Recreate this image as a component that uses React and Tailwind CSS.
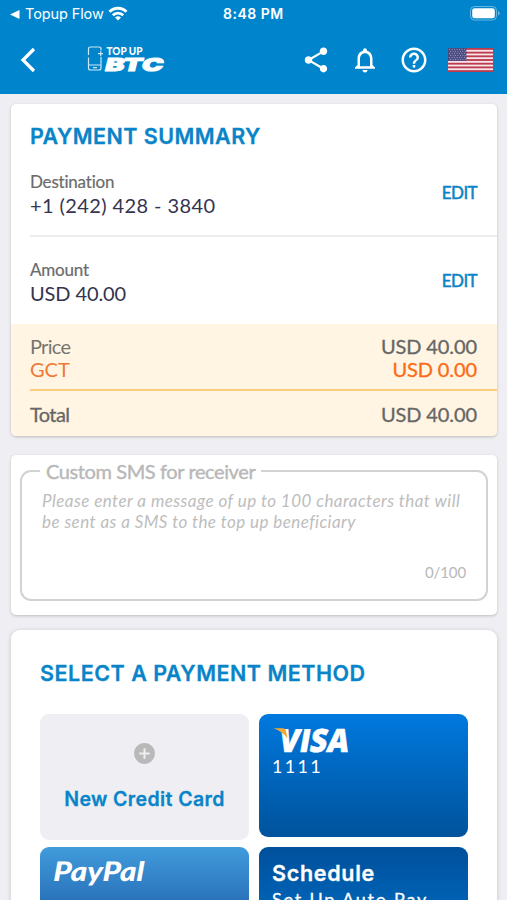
import { MdShare, MdNotificationsNone, MdHelpOutline, MdAddCircle } from "react-icons/md";

const futura = "font-['Lato','Open_Sans',sans-serif]";

function StatusBar() {
  return (
    <div className="flex h-7 items-center px-2.5 text-white">
      <div className="flex w-[213px] items-center">
        <svg className="mr-[5px]" width="10" height="9" viewBox="0 0 10 9"><path d="M0 4.5 9.5 0v9z" fill="#fff" /></svg>
        <span className="w-[79px] whitespace-nowrap text-[14.5px] leading-5 tracking-[-0.1px]">Topup Flow</span>
        <svg className="ml-1 -mt-0.5" width="20" height="15" viewBox="0 0 20 15" fill="none" stroke="#fff" strokeWidth="2.8">
          <path d="M1.5 5.8a12 12 0 0 1 17 0" />
          <path d="M4.8 9.2a7.4 7.4 0 0 1 10.4 0" />
          <path d="M10 14.6 7 11.6a4.3 4.3 0 0 1 6 0z" fill="#fff" stroke="none" />
        </svg>
      </div>
      <span className="whitespace-nowrap text-[14px] font-semibold leading-5 tracking-[0.5px]">8:48 PM</span>
      <svg className="ml-auto -mr-[3px] -mt-0.5" width="30" height="15" viewBox="0 0 30 15">
        <rect x="0.5" y="0.5" width="26" height="13.5" rx="4" fill="none" stroke="#fff" strokeOpacity=".4" />
        <rect x="2.2" y="2.2" width="22.6" height="10.1" rx="2.4" fill="#fff" />
        <path d="M28 5v4.5q1.6-.8 1.6-2.2T28 5" fill="#fff" fillOpacity=".45" />
      </svg>
    </div>
  );
}

function BtcLogo() {
  return (
    <svg className="overflow-visible" width="90" height="30" viewBox="0 0 90 30">
      <g fill="none" stroke="#fff" strokeOpacity=".8" strokeWidth="1.2">
        <path d="M14 5.500V4q0-2-2-2H3.500q-2 0-2 2v6M1.500 12.500V23q0 2 2 2H12q2 0 2-2V12M1.500 20H14M6 22.600h4" />
        <path d="M11 8.700h5M13.700 6.300v5" />
      </g>
      <text x="19.500" y="10" fill="#fff" fontFamily="Lato" fontWeight="900" fontSize="10.500" textLength="36" lengthAdjust="spacingAndGlyphs">TOP UP</text>
      <text transform="translate(17 26) skewX(-14)" fill="#fff" stroke="#fff" strokeWidth=".9" fontFamily="Inter" fontWeight="900" fontSize="17.800" textLength="58" lengthAdjust="spacingAndGlyphs">BTC</text>
    </svg>
  );
}

function Flag() {
  const stars = [];
  for (let r = 0; r < 6; r++) for (let c = 0; c < 7; c++) stars.push([1.6 + c * 2.4 + (r % 2) * 0.9, 1.3 + r * 2]);
  return (
    <svg width="45" height="24" viewBox="0 0 44 24" preserveAspectRatio="none">
      <rect width="44" height="24" fill="#f6e6ea" />
      {[0, 1, 2, 3, 4, 5, 6].map((i) => (
        <rect key={i} y={(i * 48) / 13} width="44" height={24 / 13} fill="#bd3a50" />
      ))}
      <rect width="18" height="12.900" fill="#494a80" />
      {stars.map(([x, y], i) => (
        <circle key={i} cx={x} cy={y} r=".5" fill="#b9b8d2" />
      ))}
    </svg>
  );
}

function NavBar() {
  return (
    <div className="flex h-16 items-center pr-[14px] pl-5 text-white">
      <svg width="18" height="28" viewBox="0 0 18 28" fill="none" stroke="#fff" strokeWidth="3.200"><path d="M14 3 3 14l11 11" /></svg>
      <div className="ml-[49px]"><BtcLogo /></div>
      <div className="ml-auto flex items-center">
        <MdShare size={30} />
        <MdNotificationsNone size={30} className="ml-[19px]" />
        <MdHelpOutline size={30} className="mr-[19px] ml-[19px]" />
        <Flag />
      </div>
    </div>
  );
}

function DetailRow({ label, labelClass, value, valueClass }) {
  return (
    <div className="flex items-center justify-between pr-5">
      <div>
        <div className={`${futura} h-[23px] text-[17px] leading-[23px] text-[#6b6b6b] [-webkit-text-stroke:0.2px_#6b6b6b] ${labelClass}`}>{label}</div>
        <div className={`${futura} h-[23px] whitespace-nowrap text-[20px] leading-[24px] text-[#34344f] ${valueClass}`}>{value}</div>
      </div>
      <button className={`${futura} text-[17px] leading-6 tracking-[-0.600px] text-[#0a84c6] [-webkit-text-stroke:0.5px_#0a84c6]`}>EDIT</button>
    </div>
  );
}

function PaymentSummary() {
  return (
    <section className="flex h-[332px] flex-col overflow-hidden rounded-[5px] bg-white shadow-[0_1px_3px_rgba(0,0,0,0.22)]">
      <h2 className="mt-[18px] ml-[19px] text-[21.5px] leading-7 font-semibold tracking-[0.45px] whitespace-nowrap text-[#0984c8] [-webkit-text-stroke:0.3px_#0984c8]">PAYMENT SUMMARY</h2>
      <div className="mt-5 ml-[19px] h-[67px] border-b-2 border-[#ededf0]">
        <DetailRow label="Destination" labelClass="tracking-[-0.2px]" value="+1 (242) 428 - 3840" valueClass="tracking-[0.4px]" />
      </div>
      <div className="mt-[21px] ml-[19px]">
        <DetailRow label="Amount" labelClass="tracking-[-0.2px]" value="USD 40.00" valueClass="tracking-[-0.1px]" />
      </div>
      <div className={`${futura} mt-auto h-[112px] bg-[#fff5e2] pl-[19px]`}>
        <div className="flex h-[67px] justify-between border-b-2 border-[#f9cf7d] pt-[11px] pr-5 text-[20px] leading-[23px] text-[#666]">
          <div className="text-[#757571]">
            <div className="tracking-[-0.7px]">Price</div>
            <div className="text-[#f07838]">GCT</div>
          </div>
          <div className="text-right tracking-[-0.1px] [-webkit-text-stroke:0.3px_currentColor]">
            <div>USD 40.00</div>
            <div className="text-[#fc6a17]">USD 0.00</div>
          </div>
        </div>
        <div className="flex justify-between pt-3 pr-5 text-[20px] leading-[23px] tracking-[-0.1px] text-[#666] [-webkit-text-stroke:0.3px_currentColor]">
          <span className="tracking-[-0.6px]">Total</span>
          <span>USD 40.00</span>
        </div>
      </div>
    </section>
  );
}

function CustomSms() {
  return (
    <section className="h-[160px] rounded-[5px] bg-white px-[9px] pt-[4px] shadow-[0_1px_3px_rgba(0,0,0,0.22)]">
      <fieldset className={`${futura} h-[142px] rounded-[11px] border-2 border-[#d2d2d2] pr-5 pl-[18px] text-[#b8b8b8]`}>
        <legend className="ml-0 h-6 px-[6px] text-[20px] leading-[25px] tracking-[-0.4px] whitespace-nowrap [-webkit-text-stroke:0.4px_#b8b8b8]">Custom SMS for receiver</legend>
        <p className="mt-[7px] ml-[2px] text-[17px] leading-[21px] whitespace-nowrap text-[#bdbdbd] italic">
          <span className="tracking-[0.45px]">Please enter a message of up to 100 characters that will</span>
          <br />
          <span className="tracking-[0.43px]">be sent as a SMS to the top up beneficiary</span>
        </p>
        <div className="mt-[30px] text-right text-[15px] leading-5 tracking-[-0.1px]">0/100</div>
      </fieldset>
    </section>
  );
}

function PaymentMethods() {
  return (
    <section className="h-[300px] rounded-[9px] bg-white px-[29px] pt-[29px] shadow-[0_1px_5px_rgba(0,0,0,0.18)]">
      <h2 className="h-7 text-[21.5px] leading-7 font-semibold tracking-[0.5px] whitespace-nowrap text-[#0984c8] [-webkit-text-stroke:0.3px_#0984c8]">SELECT A PAYMENT METHOD</h2>
      <div className="mt-[27px] grid grid-cols-[209px_209px] items-start gap-x-[10px] gap-y-[7px]">
        <button className="flex h-[126px] flex-col items-center rounded-[9px] bg-[#efeef3] pt-[27px]">
          <MdAddCircle size={25} color="#b9b9b9" />
          <span className="mt-[21px] text-[19.5px] leading-6 font-semibold tracking-[0.4px] whitespace-nowrap text-[#0984c8] [-webkit-text-stroke:0.3px_#0984c8]">New Credit Card</span>
        </button>
        <div className="h-[123px] rounded-[9px] bg-linear-to-b from-[#0079df] to-[#00539c] pt-3 pl-[13px]">
          <svg className="overflow-visible" width="100" height="28" viewBox="0 0 100 28">
            <text transform="translate(5.500 25.500) skewX(-10)" fill="#fff" stroke="#fff" strokeWidth=".5" fontFamily="Open Sans" fontWeight="800" fontSize="32" textLength="70" lengthAdjust="spacingAndGlyphs">VISA</text>
            <path d="M1.500 2.200h9q3 0 3.500 2.800l1.600 7.500Q10.500 5.400 1.500 2.200z" fill="#efaa33" />
          </svg>
          <div className={`${futura} text-[18px] leading-6 tracking-[2.300px] text-white`}>1111</div>
        </div>
        <div className="h-[123px] rounded-[9px] bg-linear-to-b from-[#419bdb] to-[#124191] pt-[11px] pl-3">
          <svg className="overflow-visible" width="110" height="34" viewBox="0 0 110 34">
            <text transform="translate(1 22.500) skewX(-2)" fill="#fff" fontFamily="Lato" fontStyle="italic" fontWeight="900" fontSize="27" textLength="91" lengthAdjust="spacingAndGlyphs">PayPal</text>
          </svg>
        </div>
        <div className="h-[123px] rounded-[9px] bg-linear-to-b from-[#00509b] to-[#0078d4] pt-[13px] pl-[13px] text-white">
          <div className="text-[21.5px] leading-[27px] font-semibold tracking-[0.700px] [-webkit-text-stroke:0.3px_white]">Schedule</div>
          <div className={`${futura} text-[18px] leading-6 tracking-[1.800px] whitespace-nowrap [-webkit-text-stroke:0.3px_white]`}>Set Up Auto Pay</div>
        </div>
      </div>
    </section>
  );
}

export default function App() {
  return (
    <div className="h-[900px] w-[507px] overflow-hidden bg-[#efeff3] font-['Inter','Roboto',sans-serif]">
      <header className="h-[94px] bg-[#0085cd]">
        <StatusBar />
        <NavBar />
      </header>
      <main className="flex flex-col pt-[10px] pr-[10px] pl-[11px]">
        <PaymentSummary />
        <div className="mt-[19px]"><CustomSms /></div>
        <div className="mt-[15px]"><PaymentMethods /></div>
      </main>
    </div>
  );
}
